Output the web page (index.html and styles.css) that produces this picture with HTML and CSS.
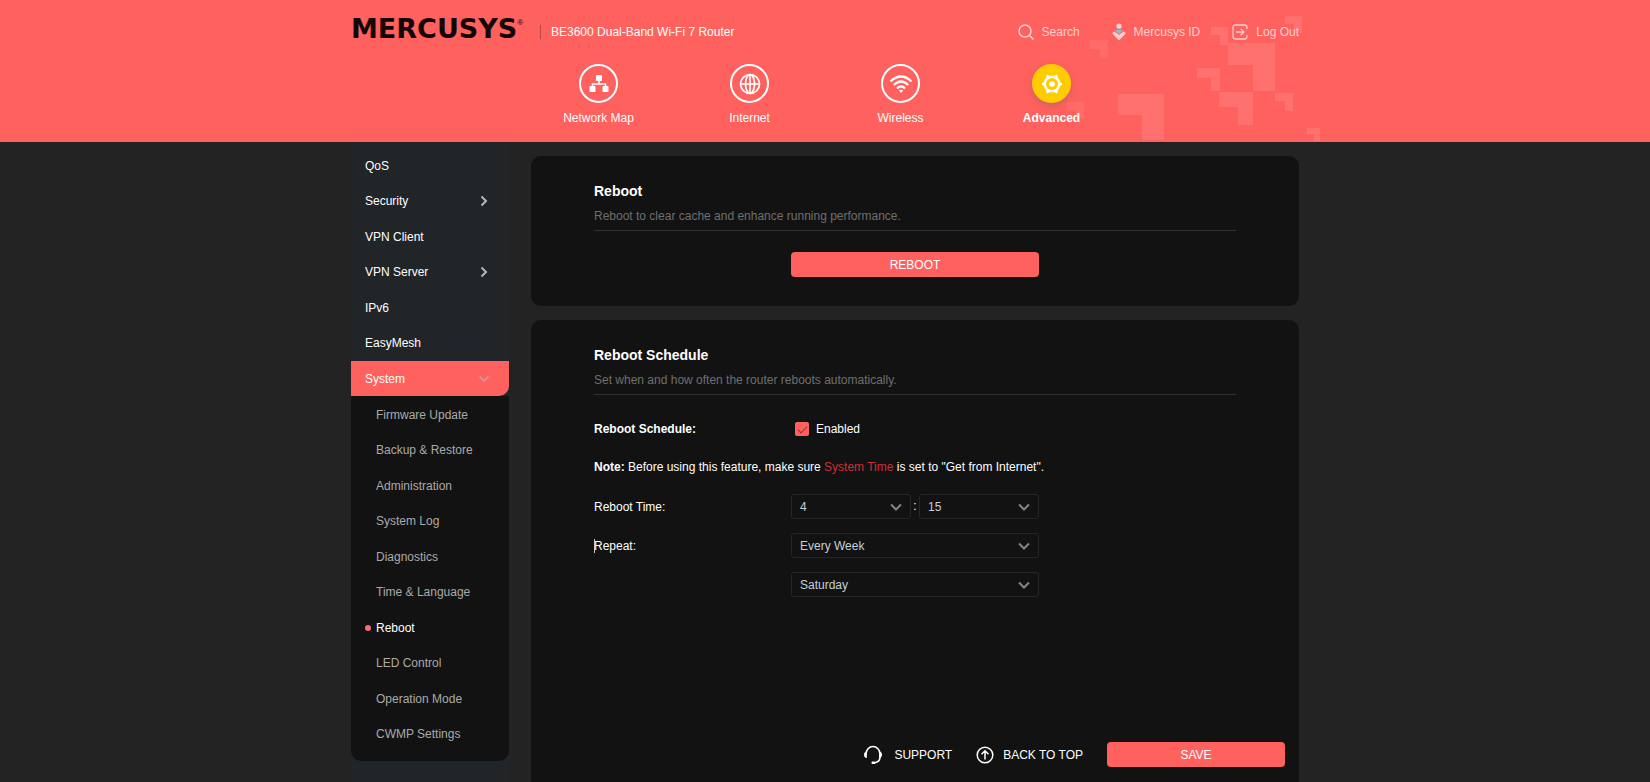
FILE: index.html
```html
<!DOCTYPE html>
<html lang="en">
<head>
    <meta charset="utf-8">
    <title>Reboot</title>
    <meta name="viewport" content="width=device-width, initial-scale=1">
    <link rel="stylesheet" href="styles.css">
</head>
<body>
    <header class="header">
        <div class="wrap header-in">
            <svg class="deco" width="260" height="142" viewBox="0 0 260 142" aria-hidden="true">
                <path d="M30 40h18v18h-8v-9h-10z" opacity=".7"/>
                <path d="M58 94h46v46h-22v-25h-24z"/>
                <path d="M168 43h47v48h-22v-26h-25z"/>
                <path d="M137 68h23v23h-9v-13h-14z"/>
                <path d="M159 92h34v33h-15v-18h-19z"/>
                <path d="M215 93h18v18h-8v-10h-10z"/>
                <path d="M247 128h13v13h-6v-7h-7z"/>
                <path d="M151 27h17v18h-8v-10h-9z"/>
                <path d="M225 16h17v17h-8v-9h-9z"/>
                <path d="M7 102h17v17h-8v-9h-9z" opacity=".7"/>
            </svg>
            <div class="top">
                <div class="brand">
                    <span class="logo">MERCUSYS<sup>®</sup></span>
                    <span class="model">BE3600 Dual-Band Wi-Fi 7 Router</span>
                </div>
                <div class="tools">
                    <a class="tool" href="#search">
                        <svg width="16" height="16" viewBox="0 0 16 16"><g fill="none" stroke="currentColor" stroke-width="1.5"><circle cx="7" cy="7" r="6"/><path d="M11.3 11.3l4.2 4.2"/></g></svg>
                        Search
                    </a>
                    <a class="tool" href="#id">
                        <svg width="14" height="18" viewBox="0 0 14 18"><path d="M3 7h8l-4 4z" fill="#8fbdd2"/><circle cx="7" cy="3.200" r="2.600" fill="currentColor"/><path d="M2.500 8.500L7 12l4.500-3.500Q14 9 13.500 10.800L8 16.400q-1 1-2 0L.500 10.800Q0 9 2.500 8.500z" fill="currentColor"/></svg>
                        Mercusys ID
                    </a>
                    <a class="tool" href="#logout">
                        <svg width="16" height="16" viewBox="0 0 16 16"><g fill="none" stroke="currentColor" stroke-width="1.3"><path d="M1 5V3.500Q1 1 3.500 1h9Q15 1 15 3.500v1.500M15 11v1.500Q15 15 12.500 15h-9Q1 15 1 12.500V5"/><path d="M4 8h8M8.700 4.700L12 8l-3.300 3.300"/></g></svg>
                        Log Out
                    </a>
                </div>
            </div>
            <nav class="nav">
                <a class="nav-item" href="#map">
                    <span class="ring"><svg width="22" height="22" viewBox="0 0 22 22"><path d="M11 8v3M4.500 14.500V11h13v3.500" fill="none" stroke="#fff" stroke-width="1.500"/><g fill="#fff"><rect x="8" y="2" width="6" height="6" rx="1"/><rect x="1.500" y="13" width="6" height="6" rx="1"/><rect x="14.500" y="13" width="6" height="6" rx="1"/></g></svg></span>
                    Network Map
                </a>
                <a class="nav-item" href="#internet">
                    <span class="ring"><svg width="22" height="22" viewBox="0 0 22 22"><g fill="none" stroke="#fff" stroke-width="1.700"><circle cx="11" cy="11" r="9.500"/><ellipse cx="11" cy="11" rx="4.500" ry="9.500"/><path d="M11 1.500v19M1.500 11h19"/></g></svg></span>
                    Internet
                </a>
                <a class="nav-item" href="#wireless">
                    <span class="ring"><svg width="24" height="20" viewBox="0 0 24 20"><g fill="none" stroke="#fff" stroke-width="2.200"><path d="M1.500 7.500Q12-2.500 22.500 7.500"/><path d="M4.800 11Q12 4 19.200 11"/><path d="M8 14.400Q12 10.200 16 14.400"/></g><path d="M9.800 16.500Q12 14.800 14.200 16.500L12 19z" fill="#fff"/></svg></span>
                    Wireless
                </a>
                <a class="nav-item active" href="#advanced">
                    <span class="ring"><svg width="22" height="22" viewBox="0 0 22 22"><path d="M6.500 3.200h9L20 11l-4.500 7.800h-9L2 11z" fill="#fff" stroke="#fff" stroke-linejoin="round"/><circle cx="11" cy="11" r="6" fill="#fc0"/><g fill="#fff"><circle cx="11" cy="11" r="2.800"/><circle cx="6.500" cy="3" r="1.300"/><circle cx="15.500" cy="3" r="1.300"/><circle cx="2" cy="11" r="1.300"/><circle cx="20" cy="11" r="1.300"/><circle cx="6.500" cy="19" r="1.300"/><circle cx="15.500" cy="19" r="1.300"/></g></svg></span>
                    Advanced
                </a>
            </nav>
        </div>
    </header>

    <div class="wrap page">
        <aside class="side">
            <ul class="menu">
                <li><a href="#qos">QoS</a></li>
                <li><a href="#security">Security <svg class="arrow" width="8" height="12" viewBox="0 0 8 12"><path d="M1.500 1.500L6 6l-4.500 4.500"/></svg></a></li>
                <li><a href="#vpn-client">VPN Client</a></li>
                <li><a href="#vpn-server">VPN Server <svg class="arrow" width="8" height="12" viewBox="0 0 8 12"><path d="M1.500 1.500L6 6l-4.500 4.500"/></svg></a></li>
                <li><a href="#ipv6">IPv6</a></li>
                <li><a href="#easymesh">EasyMesh</a></li>
                <li><a class="open" href="#system">System <svg class="arrow" width="12" height="8" viewBox="0 0 12 8"><path d="M1.500 1.500L6 6l4.500-4.500"/></svg></a></li>
            </ul>
            <ul class="menu submenu">
                <li><a href="#firmware">Firmware Update</a></li>
                <li><a href="#backup">Backup &amp; Restore</a></li>
                <li><a href="#admin">Administration</a></li>
                <li><a href="#log">System Log</a></li>
                <li><a href="#diagnostics">Diagnostics</a></li>
                <li><a href="#time">Time &amp; Language</a></li>
                <li><a class="current" href="#reboot">Reboot</a></li>
                <li><a href="#led">LED Control</a></li>
                <li><a href="#mode">Operation Mode</a></li>
                <li><a href="#cwmp">CWMP Settings</a></li>
            </ul>
        </aside>

        <main class="content">
            <section class="panel">
                <h2>Reboot</h2>
                <p class="desc">Reboot to clear cache and enhance running performance.</p>
                <button class="btn btn-reboot" type="button">REBOOT</button>
            </section>

            <section class="panel panel-fill">
                <h2>Reboot Schedule</h2>
                <p class="desc">Set when and how often the router reboots automatically.</p>
                <form class="form">
                    <div class="row">
                        <span class="label"><b>Reboot Schedule:</b></span>
                        <label class="check"><input type="checkbox" checked>Enabled</label>
                    </div>
                    <p class="row note"><b>Note:</b> Before using this feature, make sure <a href="#time">System Time</a> is set to "Get from Internet".</p>
                    <div class="row">
                        <label class="label" for="hour">Reboot Time:</label>
                        <div class="field">
                            <span class="select"><select id="hour"><option>4</option></select><svg class="arrow" width="12" height="8" viewBox="0 0 12 8"><path d="M1 1.500l5 5 5-5"/></svg></span>
                            <span class="colon">:</span>
                            <span class="select"><select aria-label="Minute"><option>15</option></select><svg class="arrow" width="12" height="8" viewBox="0 0 12 8"><path d="M1 1.500l5 5 5-5"/></svg></span>
                        </div>
                    </div>
                    <div class="row">
                        <label class="label caret" for="repeat">Repeat:</label>
                        <div class="field">
                            <span class="select"><select id="repeat"><option>Every Week</option></select><svg class="arrow" width="12" height="8" viewBox="0 0 12 8"><path d="M1 1.500l5 5 5-5"/></svg></span>
                        </div>
                    </div>
                    <div class="row">
                        <span class="label"></span>
                        <div class="field">
                            <span class="select"><select aria-label="Day"><option>Saturday</option></select><svg class="arrow" width="12" height="8" viewBox="0 0 12 8"><path d="M1 1.500l5 5 5-5"/></svg></span>
                        </div>
                    </div>
                </form>
                <footer class="foot">
                    <a class="foot-link" href="#support">
                        <svg width="20" height="20" viewBox="0 0 20 20"><path d="M3 10.500V9a7 7.500 0 0 1 14 0v3q0 4.500-4.500 5.500l-3 .5" fill="none" stroke="#fff" stroke-width="1.600"/><path d="M3.800 6.500v6.500Q1 12.800 1 9.800 1 7 3.800 6.500zM16.200 6.500v6.500Q19 12.800 19 9.800 19 7 16.200 6.500z" fill="#fff"/><rect x="8.500" y="16.500" width="4" height="2.500" rx="1" fill="#fff"/></svg>
                        SUPPORT
                    </a>
                    <a class="foot-link foot-top" href="#top">
                        <svg width="18" height="18" viewBox="0 0 18 18"><g fill="none" stroke="#fff" stroke-width="1.500"><circle cx="9" cy="9" r="7.800"/><path d="M9 13.500V5M5.500 8.300L9 4.800l3.500 3.500"/></g></svg>
                        BACK TO TOP
                    </a>
                    <button class="btn btn-save" type="button">SAVE</button>
                </footer>
            </section>
        </main>
    </div>
</body>
</html>
```
FILE: styles.css
```css
:root {
    --red: #ff615e;
    --page: #232323;
    --side: #212528;
    --panel: #121212;
}

* {
    box-sizing: border-box;
}

body {
    margin: 0;
    min-height: 100vh;
    display: flex;
    flex-direction: column;
    background: var(--page);
    color: #fff;
    font: 12px/16px "Liberation Sans", Arial, sans-serif;
}

a {
    color: inherit;
    text-decoration: none;
}

h2, p, ul {
    margin: 0;
    padding: 0;
}

.wrap {
    width: 100%;
    max-width: 948px;
    margin: 0 auto;
}

/* Header */
.header {
    background: var(--red);
    overflow: hidden;
}

.header-in {
    position: relative;
    padding: 15px 0 16px;
}

.deco {
    position: absolute;
    top: 0;
    right: -21px;
    fill: rgba(255, 255, 255, 0.1);
}

.top {
    position: relative;
    display: flex;
    justify-content: space-between;
    align-items: center;
    height: 33px;
}

.brand {
    display: flex;
    align-items: center;
}

.logo {
    display: flex;
    width: 189px;
    padding-bottom: 6px;
    color: #140606;
    font: bold 27px/27px "DejaVu Sans", sans-serif;
}

.logo sup {
    font: 8px/8px "Liberation Sans", Arial, sans-serif;
    padding-top: 4px;
}

.model {
    padding-left: 11px;
    background: linear-gradient(#b34a48, #b34a48) 0 50% / 1px 14px no-repeat;
}

.tools {
    display: flex;
    gap: 32px;
    color: #ffd0cf;
}

.tool {
    display: flex;
    align-items: center;
    gap: 8px;
}

.nav {
    position: relative;
    display: flex;
    justify-content: center;
    padding-top: 16px;
}

.nav-item {
    display: flex;
    flex-direction: column;
    align-items: center;
    gap: 7px;
    width: 151px;
}

.ring {
    display: flex;
    align-items: center;
    justify-content: center;
    width: 39px;
    height: 39px;
    border: 2px solid #fff;
    border-radius: 50%;
}

.active {
    font-weight: bold;
}

.active .ring {
    background: #fc0;
    border-color: #fc0;
    box-shadow: 0 3px 6px rgba(160, 100, 100, 0.5);
}

/* Sidebar */
.page {
    flex: 1;
    display: flex;
    gap: 22px;
}

.side {
    width: 158px;
    padding-top: 6px;
    background: var(--side);
}

.menu {
    list-style: none;
}

.menu li {
    height: 35px;
}

.menu li:nth-child(even) {
    height: 36px;
}

.menu a {
    display: flex;
    align-items: center;
    justify-content: space-between;
    height: 100%;
    padding: 0 21px 0 14px;
}

.menu .open {
    padding-right: 19px;
    background: var(--red);
    border-radius: 0 0 10px 0;
}

.submenu {
    padding: 1px 0 9px;
    background: var(--panel);
    border-radius: 0 0 10px 10px;
    color: #aaa;
}

.submenu a {
    padding-left: 25px;
}

.submenu .current {
    justify-content: flex-start;
    gap: 5px;
    padding-left: 14px;
    color: #fff;
}

.current::before {
    content: "";
    width: 6px;
    height: 6px;
    border-radius: 50%;
    background: #f4706c;
}

.arrow {
    fill: none;
    stroke: #b5b7b8;
    stroke-width: 2;
}

.open .arrow {
    stroke: #d98f8e;
}

/* Content */
.content {
    flex: 1;
    display: flex;
    flex-direction: column;
    gap: 14px;
    padding-top: 14px;
}

.panel {
    padding: 27px 63px 29px;
    background: var(--panel);
    border-radius: 10px;
}

.panel-fill {
    flex: 1;
    display: flex;
    flex-direction: column;
    padding-bottom: 15px;
    border-radius: 10px 10px 0 0;
}

h2 {
    font-size: 14px;
    line-height: 16px;
}

.desc {
    padding: 9px 0 6px;
    border-bottom: 1px solid #303030;
    color: #6f6f6f;
}

.btn {
    display: block;
    height: 25px;
    border: 0;
    border-radius: 4px;
    background: var(--red);
    color: #fff;
    font: inherit;
    cursor: pointer;
}

.btn-reboot {
    width: 248px;
    margin: 21px auto 0;
}

.form {
    display: flex;
    flex-direction: column;
    gap: 14px;
    padding-top: 21px;
}

.row {
    display: flex;
    align-items: center;
    height: 25px;
}

.note {
    display: block;
    line-height: 25px;
}

.note a {
    color: #cf2f37;
}

.label {
    width: 197px;
}

/* Text cursor in front of the label */
.caret {
    position: relative;
}

.caret::before {
    content: "";
    position: absolute;
    left: 0;
    top: 1px;
    width: 1px;
    height: 14px;
    background: #ccc;
}

.check {
    display: flex;
    align-items: center;
    gap: 7px;
    padding-left: 4px;
}

.check input {
    appearance: none;
    display: flex;
    justify-content: center;
    width: 14px;
    height: 14px;
    margin: 0;
    border-radius: 2px;
    background: var(--red);
}

.check input:checked::before {
    content: "";
    width: 8px;
    height: 4px;
    margin-top: 4px;
    border: solid #8c2f33;
    border-width: 0 0 1px 1px;
    transform: rotate(-45deg);
}

.field {
    display: flex;
    width: 248px;
}

.colon {
    width: 8px;
    text-align: center;
    line-height: 25px;
}

.select {
    position: relative;
    flex: 1;
}

.select select {
    appearance: none;
    display: block;
    width: 100%;
    height: 25px;
    padding: 0 8px;
    border: 1px solid #262626;
    border-radius: 3px;
    background: var(--panel);
    color: #c3d0d8;
    font: inherit;
}

.select .arrow {
    position: absolute;
    right: 9px;
    top: 9px;
    stroke: #858585;
    pointer-events: none;
}

.foot {
    display: flex;
    align-items: center;
    justify-content: flex-end;
    gap: 24px;
    margin: auto -49px 0 0;
}

.foot-link {
    display: flex;
    align-items: center;
    gap: 11px;
}

.foot-top {
    gap: 9px;
}

.btn-save {
    width: 178px;
}
```
